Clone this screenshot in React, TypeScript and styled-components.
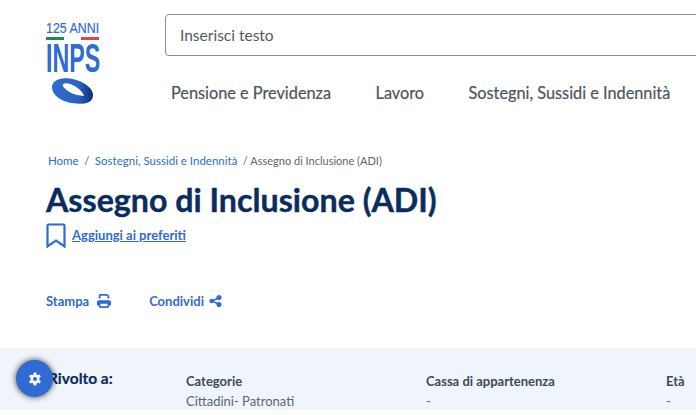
import styled, { createGlobalStyle } from 'styled-components';

const GlobalStyle = createGlobalStyle`
  html, body { margin: 0; padding: 0; background: #fff; overflow: hidden; }
  body { font-family: Lato, "Noto Sans", sans-serif; width: 696px; height: 415px; }
`;

const Page = styled.div`
  width: 696px;
  height: 415px;
  overflow: hidden;
  display: flex;
  flex-direction: column;
`;

const Header = styled.header`
  display: flex;
  gap: 66px;
  padding: 14px 0 0 46px;
  height: 96px;
`;

const Logo = styled.div`
  width: 53px;
  display: flex;
  flex-direction: column;
  align-items: flex-start;
  flex-shrink: 0;
  color: #2f6bd0;
`;

const LogoYears = styled.div`
  font: 400 15.5px/15px "Liberation Sans", sans-serif;
  white-space: nowrap;
  margin-top: 6px;
  transform: scaleX(0.8);
  transform-origin: left center;
  width: 66px;
  -webkit-text-stroke: 0.2px #2f6bd0;
`;

const Flags = styled.div`
  display: flex;
  justify-content: space-between;
  width: 53px;
  margin-top: 2px;
`;

const Flag = styled.span<{ $color: string }>`
  width: 18px;
  height: 3px;
  background: ${(p) => p.$color};
`;

const LogoName = styled.div`
  font: 700 40px/32px "Liberation Sans", sans-serif;
  white-space: nowrap;
  transform: scaleX(0.58);
  transform-origin: left center;
  margin-top: 2px;
`;

const Swirl = styled.svg`
  margin: 3px 0 0 5px;
`;

const HeaderMain = styled.div`
  display: flex;
  flex-direction: column;
  flex-shrink: 0;
`;

const SearchBox = styled.div`
  width: 560px;
  height: 40px;
  border: 1px solid #8a8f94;
  border-radius: 4px;
  display: flex;
  align-items: center;
  padding-left: 14px;
  font-size: 15.5px;
  color: #4f5a64;
  box-sizing: content-box;
`;

const Nav = styled.nav`
  display: flex;
  gap: 44.5px;
  margin-top: 26px;
  margin-left: 6px;
  font-size: 16.3px;
  line-height: 22px;
  color: #4a5560;
  white-space: nowrap;
  -webkit-text-stroke: 0.2px #4a5560;
`;

const Content = styled.main`
  padding: 0 0 0 46px;
`;

const Crumbs = styled.div`
  display: flex;
  gap: 5.5px;
  margin: 43px 0 0 2px;
  font-size: 11.5px;
  line-height: 16px;
  color: #5b6670;
`;

const Crumb = styled.span`
  color: #2f6bd0;
`;

const CrumbCurrent = styled.span`
  font-size: 11px;
`;

const Title = styled.h1`
  margin: 11px 0 0;
  font: 700 32.2px/40px Lato, sans-serif;
  color: #0b2d5e;
  white-space: nowrap;
  -webkit-text-stroke: 0.4px #0b2d5e;
`;

const FavRow = styled.div`
  display: flex;
  align-items: flex-start;
  gap: 6px;
  margin-top: 3px;
`;

const FavLink = styled.a`
  margin-top: 3px;
  font-size: 13px;
  font-weight: 700;
  line-height: 18px;
  color: #2f6bd0;
  text-decoration: underline;
`;

const Actions = styled.div`
  display: flex;
  gap: 38px;
  margin-top: 43px;
`;

const Action = styled.a<{ $gap: number }>`
  display: flex;
  align-items: center;
  gap: ${(p) => p.$gap}px;
  font-size: 13px;
  font-weight: 700;
  line-height: 18px;
  color: #2f6bd0;
`;

const Band = styled.section`
  height: 62px;
  margin-top: 38px;
  background: #f0f4fb;
  display: flex;
  padding-left: 48px;
  overflow: hidden;
  flex-shrink: 0;
`;

const BandTitle = styled.div`
  width: 138px;
  flex-shrink: 0;
  margin-top: 20px;
  font-size: 15.5px;
  font-weight: 700;
  line-height: 20px;
  color: #0b2d5e;
  -webkit-text-stroke: 0.2px #0b2d5e;
`;

const Column = styled.div<{ $width: number }>`
  width: ${(p) => p.$width}px;
  margin-top: 23px;
  flex-shrink: 0;
  font-size: 13px;
  line-height: 20px;
  color: #5b6670;
  white-space: nowrap;
`;

const ColumnHead = styled.div`
  font-weight: 700;
  color: #3c4a57;
`;

const Fab = styled.button`
  position: absolute;
  left: 16px;
  top: 360px;
  width: 37px;
  height: 37px;
  border: 0;
  padding: 0;
  border-radius: 50%;
  background: #2f6bd0;
  box-shadow: 0 0 6px rgba(0, 0, 0, 0.75);
  display: flex;
  align-items: center;
  justify-content: center;
`;

export default function App(): React.JSX.Element {
  return (
    <Page>
      <GlobalStyle />
      <Header>
        <Logo>
          <LogoYears>125 ANNI</LogoYears>
          <Flags>
            <Flag $color="#1f8a4c" />
            <Flag $color="#e0434b" />
          </Flags>
          <LogoName>INPS</LogoName>
          <Swirl width="43" height="28" viewBox="0 0 44 28">
            <defs>
              <linearGradient id="swirl" x1="0" x2="1" y1="0" y2="0">
                <stop offset="0" stopColor="#2f6bd0" />
                <stop offset="0.65" stopColor="#2a62c4" />
                <stop offset="1" stopColor="#0b2d6e" />
              </linearGradient>
            </defs>
            <path
              fillRule="evenodd"
              fill="url(#swirl)"
              d="M1 10C1 4 8 0 17 1C30 2 43 10 43 18C43 25 37 27 29 27C14 27 1 20 1 10ZM12 9C15 14 24 19 34 19C31 12 22 6 15 6C12.500 6 11.500 7.500 12 9Z"
            />
          </Swirl>
        </Logo>
        <HeaderMain>
          <SearchBox>Inserisci testo</SearchBox>
          <Nav>
            <span>Pensione e Previdenza</span>
            <span>Lavoro</span>
            <span>Sostegni, Sussidi e Indennità</span>
          </Nav>
        </HeaderMain>
      </Header>
      <Content>
        <Crumbs>
          <Crumb>Home</Crumb>
          <span>/</span>
          <Crumb>Sostegni, Sussidi e Indennità</Crumb>
          <CrumbCurrent>/ Assegno di Inclusione (ADI)</CrumbCurrent>
        </Crumbs>
        <Title>Assegno di Inclusione (ADI)</Title>
        <FavRow>
          <svg width="20" height="26" viewBox="0 0 20 26" fill="none" stroke="#2f6bd0" strokeWidth="2.200">
            <path d="M1.500 2.500Q1.500 1.500 2.500 1.500H17.500Q18.500 1.500 18.500 2.500V23.500L10 17.500L1.500 23.500Z" />
          </svg>
          <FavLink>Aggiungi ai preferiti</FavLink>
        </FavRow>
        <Actions>
          <Action $gap={8}>
            Stampa
            <svg width="14" height="14" viewBox="0 0 512 512" fill="#2f6bd0">
              <path d="M128 0C93 0 64 29 64 64V160H128V64H355L384 93V160H448V93C448 76 441 60 429 48L400 19C388 7 372 0 355 0H128ZM384 352V448H128V352H384ZM128 512H384C419 512 448 483 448 448V416H480C498 416 512 402 512 384V288C512 253 483 224 448 224H64C29 224 0 253 0 288V384C0 402 14 416 32 416H64V448C64 483 93 512 128 512Z" />
            </svg>
          </Action>
          <Action $gap={5}>
            Condividi
            <svg width="13" height="14" viewBox="0 0 448 512" fill="#2f6bd0">
              <path d="M352 224C405 224 448 181 448 128S405 32 352 32S256 75 256 128C256 135 257 141 258 147L154 199C137 182 113 172 88 172C35 172 0 210 0 256S35 340 88 340C113 340 137 330 154 313L258 365C257 371 256 377 256 384C256 437 299 480 352 480S448 437 448 384S405 288 352 288C327 288 303 298 286 315L182 263C183 261 183 251 182 249L286 197C303 214 327 224 352 224Z" />
            </svg>
          </Action>
        </Actions>
      </Content>
      <Band>
        <BandTitle>Rivolto a:</BandTitle>
        <Column $width={240}>
          <ColumnHead>Categorie</ColumnHead>
          Cittadini- Patronati
        </Column>
        <Column $width={240}>
          <ColumnHead>Cassa di appartenenza</ColumnHead>
          -
        </Column>
        <Column $width={60}>
          <ColumnHead>Età</ColumnHead>
          -
        </Column>
      </Band>
      <Fab aria-label="Impostazioni">
        <svg width="14" height="14" viewBox="0 0 24 24" fill="#fff">
          <path
            fillRule="evenodd"
            d="M10 1H14L14.800 4.300L16.700 5.400L20 4.400L22 7.900L19.500 10.200V13.800L22 16.100L20 19.600L16.700 18.600L14.800 19.700L14 23H10L9.200 19.700L7.300 18.600L4 19.600L2 16.100L4.500 13.800V10.200L2 7.900L4 4.400L7.300 5.400L9.200 4.300ZM12 8.500A3.500 3.500 0 1 0 12 15.500A3.500 3.500 0 1 0 12 8.500Z"
          />
        </svg>
      </Fab>
    </Page>
  );
}
